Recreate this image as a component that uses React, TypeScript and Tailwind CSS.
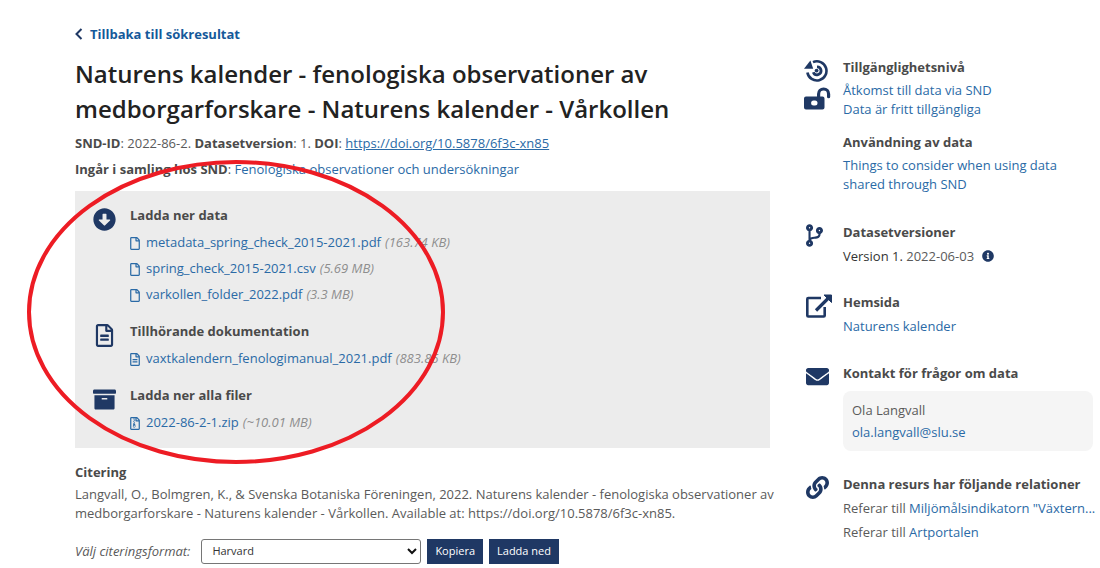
import type { ReactNode } from 'react';
import {
  FaArchive,
  FaArrowAltCircleDown,
  FaCodeBranch,
  FaEnvelope,
  FaInfoCircle,
  FaLink,
  FaRegFile,
  FaRegFileAlt,
  FaRegFileArchive,
} from 'react-icons/fa';

const dataFiles = [
  { name: 'metadata_spring_check_2015-2021.pdf', size: '163.74 KB' },
  { name: 'spring_check_2015-2021.csv', size: '5.69 MB' },
  { name: 'varkollen_folder_2022.pdf', size: '3.3 MB' },
];

const AccessIcon = () => (
  <svg width="24" height="24" viewBox="0 0 24 24" fill="none" aria-hidden="true">
    <path d="M9 3.1A9.600 9.600 0 1 1 3.400 13.500" stroke="#1f3864" strokeWidth="2.600" />
    <path d="M13 7.800a4 4 0 1 1-3.700 5.400" stroke="#1f3864" strokeWidth="2.800" />
    <circle cx="12.600" cy="11.600" r="1.900" fill="#1f3864" />
    <path d="M0 9.800 6.400 1.400l2.800 8.400z" fill="#1f3864" />
  </svg>
);

const OpenLockIcon = () => (
  <svg width="27" height="24" viewBox="0 0 27 24" fill="none" aria-hidden="true">
    <path d="M14.6 11V7a5 5 0 0 1 10 0v2.700" stroke="#1f3864" strokeWidth="3.2" strokeLinecap="round" />
    <path
      fillRule="evenodd"
      d="M2 9.500h16.500a2 2 0 0 1 2 2v9a2 2 0 0 1-2 2H2a2 2 0 0 1-2-2v-9a2 2 0 0 1 2-2zM9.600 13.500a2.500 2.500 0 0 0 0 5h1.400a2.500 2.500 0 0 0 0-5z"
      fill="#1f3864"
    />
  </svg>
);

const ExternalIcon = () => (
  <svg className="ml-0.5" width="27" height="24" viewBox="0 0 27 24" fill="none" aria-hidden="true">
    <path d="M15 4H2.300a1 1 0 0 0-1 1v16.500a1 1 0 0 0 1 1h15.400a1 1 0 0 0 1-1V13" stroke="#1f3864" strokeWidth="2.600" />
    <path d="M10 16.500 22 4.500" stroke="#1f3864" strokeWidth="3.200" />
    <path d="M18 1h7.500v7.500z" fill="#1f3864" stroke="#1f3864" strokeLinejoin="round" />
  </svg>
);

const Link = ({ children }: { children: ReactNode }) => (
  <a href="#" className="text-[#2a6aa6]">
    {children}
  </a>
);

type FileRowProps = { icon: ReactNode; name: string; size: string };

const FileRow = ({ icon, name, size }: FileRowProps) => (
  <li className="flex h-[26px] items-center">
    <a href="#" className="flex items-center gap-1.5 text-[#2a6aa6]">
      {icon}
      {name}
    </a>
    <i className="ml-1 text-[#8e8e8e]">({size})</i>
  </li>
);

type SectionProps = { icon: ReactNode; title: string; children: ReactNode };

const DownloadGroup = ({ icon, title, children }: SectionProps) => (
  <section className="flex">
    <div className="flex w-[37px] shrink-0 pt-[3px] text-[#1f3864]">{icon}</div>
    <div>
      <h2 className="mb-[5px] font-bold leading-5 text-[#4a4a4a]">{title}</h2>
      <ul>{children}</ul>
    </div>
  </section>
);

const SideSection = ({ icon, title, children }: SectionProps) => (
  <section className="flex">
    <div className="flex w-[39px] shrink-0 flex-col gap-1 pt-0.5 text-[#1f3864]">{icon}</div>
    <div className="min-w-0 flex-1">
      <h2 className="mb-1 font-bold leading-5 text-[#4a4a4a]">{title}</h2>
      {children}
    </div>
  </section>
);

const Citation = () => (
  <section className="mt-[14px]">
    <h2 className="mb-[3px] font-bold leading-5 text-[#4a4a4a]">Citering</h2>
    <p className="-mr-3 leading-[19px]">
      Langvall, O., Bolmgren, K., &amp; Svenska Botaniska Föreningen, 2022. Naturens kalender - fenologiska
      observationer av medborgarforskare - Naturens kalender - Vårkollen. Available at:
      https://doi.org/10.5878/6f3c-xn85.
    </p>
    <div className="mt-4 flex items-center text-[11px]">
      <label htmlFor="format" className="mr-[11px] text-[13px] italic">
        Välj citeringsformat:
      </label>
      <div className="relative">
        <select
          id="format"
          className="h-[25px] w-[220px] appearance-none rounded-[3px] border border-[#767676] bg-white px-2.5 text-[#333]"
        >
          <option>Harvard</option>
        </select>
        <svg
          className="pointer-events-none absolute top-2 right-1"
          width="10"
          height="8"
          viewBox="0 0 10 8"
          fill="none"
          aria-hidden="true"
        >
          <path d="m1 2 4 4 4-4" stroke="#111" strokeWidth="2" />
        </svg>
      </div>
      <button className="ml-1.5 h-[25px] bg-[#1f3864] px-2 font-medium text-white">Kopiera</button>
      <button className="ml-1.5 h-[25px] bg-[#1f3864] px-2 font-medium text-white">Ladda ned</button>
    </div>
  </section>
);

const Sidebar = () => (
  <aside className="pt-[57px]">
    <SideSection
      icon={
        <>
          <AccessIcon />
          <OpenLockIcon />
        </>
      }
      title="Tillgänglighetsnivå"
    >
      <p className="leading-[19px]">
        <Link>Åtkomst till data via SND</Link>
        <br />
        <Link>Data är fritt tillgängliga</Link>
      </p>
      <h2 className="mt-[13px] mb-1 font-bold leading-5 text-[#4a4a4a]">Användning av data</h2>
      <p className="leading-[19px]">
        <Link>Things to consider when using data shared through SND</Link>
      </p>
    </SideSection>
    <div className="mt-7">
      <SideSection icon={<FaCodeBranch className="ml-0.5 h-[23px] w-[17px]" />} title="Datasetversioner">
        <p className="flex items-center leading-5">
          <span>
            <span className="text-[#333]">Version 1.</span> 2022-06-03
          </span>
          <FaInfoCircle className="ml-2 size-3 text-[#1f3864]" />
        </p>
      </SideSection>
    </div>
    <div className="mt-[26px]">
      <SideSection icon={<ExternalIcon />} title="Hemsida">
        <p className="leading-5">
          <Link>Naturens kalender</Link>
        </p>
      </SideSection>
    </div>
    <div className="mt-[27px]">
      <SideSection icon={<FaEnvelope className="ml-0.5 size-[23px]" />} title="Kontakt för frågor om data">
        <div className="mt-2 rounded-lg bg-[#f5f5f5] px-[9px] py-2 leading-[22px]">
          <p>Ola Langvall</p>
          <Link>ola.langvall@slu.se</Link>
        </div>
      </SideSection>
    </div>
    <div className="mt-[23px]">
      <SideSection icon={<FaLink className="ml-0.5 size-[23px]" />} title="Denna resurs har följande relationer">
        <div className="-mt-0.5 leading-6 whitespace-nowrap">
          <p>
            Referar till <Link>Miljömålsindikatorn "Växtern...</Link>
          </p>
          <p>
            Referar till <Link>Artportalen</Link>
          </p>
        </div>
      </SideSection>
    </div>
  </aside>
);

const App = () => {
  return (
    <div className="relative grid grid-cols-[minmax(0,1fr)_289px] gap-[34px] bg-white pr-[7px] pl-[75px] font-['Open_Sans','Noto_Sans',sans-serif] text-[13px] text-[#5a5a5a]">
      <main className="pt-6">
        <a href="#" className="flex items-center gap-[7px] font-bold leading-5 text-[#15599a]">
          <svg width="8" height="12" viewBox="0 0 8 12" fill="none" aria-hidden="true">
            <path d="M6.500 1 1.500 6l5 5" stroke="#1f3864" strokeWidth="2" />
          </svg>
          Tillbaka till sökresultat
        </a>
        <h1 className="mt-3 text-2xl font-semibold leading-[35px] text-[#222]">
          Naturens kalender - fenologiska observationer av medborgarforskare - Naturens kalender - Vårkollen
        </h1>
        <div className="mt-1 leading-[26px]">
          <p>
            <b className="text-[#4a4a4a]">SND-ID</b>: 2022-86-2. <b className="text-[#4a4a4a]">Datasetversion</b>: 1.{' '}
            <b className="text-[#4a4a4a]">DOI</b>:{' '}
            <a href="#" className="text-[#2a6aa6] underline">
              https://doi.org/10.5878/6f3c-xn85
            </a>
          </p>
          <p>
            <b className="text-[#4a4a4a]">Ingår i samling hos SND</b>:{' '}
            <Link>Fenologiska observationer och undersökningar</Link>
          </p>
        </div>
        <div className="mt-[9px] flex flex-col gap-[13px] bg-[#ececec] px-[18px] pt-[14px] pb-3">
          <DownloadGroup icon={<FaArrowAltCircleDown className="size-[23px]" />} title="Ladda ner data">
            {dataFiles.map((file) => (
              <FileRow key={file.name} icon={<FaRegFile className="h-[13px] w-2.5" />} {...file} />
            ))}
          </DownloadGroup>
          <DownloadGroup icon={<FaRegFileAlt className="size-[23px]" />} title="Tillhörande dokumentation">
            <FileRow
              icon={<FaRegFileAlt className="h-[13px] w-2.5" />}
              name="vaxtkalendern_fenologimanual_2021.pdf"
              size="883.86 KB"
            />
          </DownloadGroup>
          <DownloadGroup icon={<FaArchive className="size-[23px]" />} title="Ladda ner alla filer">
            <FileRow icon={<FaRegFileArchive className="h-[13px] w-2.5" />} name="2022-86-2-1.zip" size="~10.01 MB" />
          </DownloadGroup>
        </div>
        <Citation />
      </main>
      <Sidebar />
      <svg
        className="pointer-events-none absolute top-[160px] left-[26px]"
        width="420"
        height="306"
        viewBox="0 0 420 306"
        fill="none"
        aria-hidden="true"
      >
        <ellipse cx="210" cy="152" rx="207" ry="150" stroke="#ed1c24" strokeWidth="4" />
      </svg>
    </div>
  );
};

export default App;
